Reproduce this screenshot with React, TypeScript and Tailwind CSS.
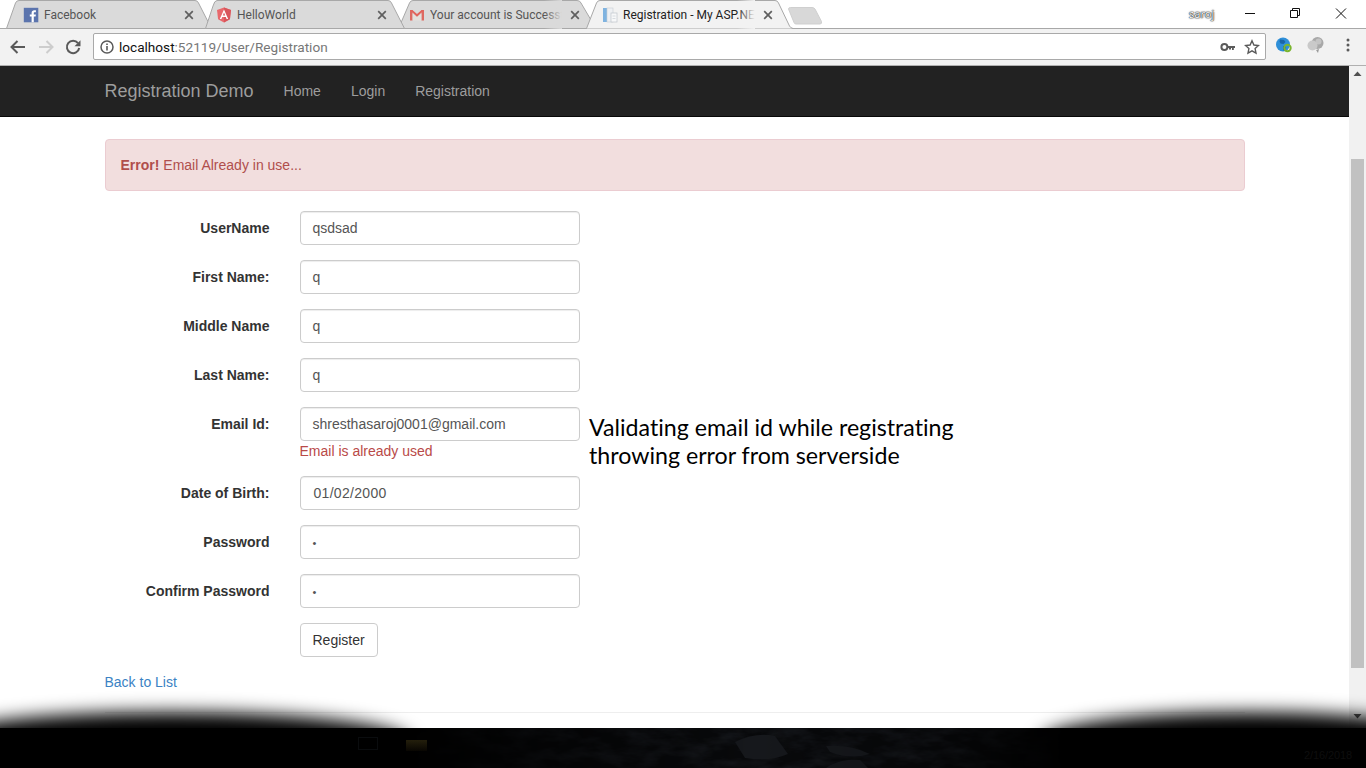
import React from "react";

const sans = "font-['Liberation_Sans',Arial,sans-serif]";

function TabShape({ d, fill, stroke }: { d: string; fill: string; stroke: string }) {
  return (
    <svg className="absolute left-0 top-0" width="1366" height="29" viewBox="0 0 1366 29">
      <path d={d} fill={fill} stroke={stroke} strokeWidth="1" />
    </svg>
  );
}

function Close() {
  return (
    <svg width="10" height="10" viewBox="0 0 10 10" className="shrink-0">
      <path d="M1.2 1.2L8.8 8.8M8.8 1.2L1.2 8.8" stroke="#5f5f5f" strokeWidth="1.7" />
    </svg>
  );
}

function Tab({
  left,
  width,
  icon,
  title,
  active,
  fade,
}: {
  left: number;
  width: number;
  icon: React.ReactNode;
  title: string;
  active?: boolean;
  fade?: boolean;
}) {
  return (
    <div className="absolute top-0 h-[29px] flex items-center" style={{ left, width }}>
      <div className="w-4 h-4 shrink-0">{icon}</div>
      <div
        className={`relative ml-[5px] flex-1 overflow-hidden whitespace-nowrap text-[12px] leading-[31px] h-[29px] font-['Roboto',sans-serif] ${
          active ? "text-[#222]" : "text-[#555]"
        }`}
      >
        {title}
        {fade && (
          <div
            className={`absolute right-0 top-0 h-full w-[18px] bg-gradient-to-r from-transparent ${
              active ? "to-[#f2f2f2]" : "to-[#dadada]"
            }`}
          />
        )}
      </div>
      <div className={fade ? "ml-[8px]" : "ml-[3px]"}>
        <Close />
      </div>
    </div>
  );
}

const FacebookIcon = (
  <svg viewBox="0 0 16 16" width="16" height="16">
    <rect x="0" y="0" width="14.5" height="14.5" fill="#5b74ad" transform="translate(.8 .8)" />
    <path d="M10.8 15.3V9.6h1.8l.3-2.1h-2.1V6.2c0-.6.2-1 1-1h1.1V3.3c-.2 0-.9-.1-1.6-.1-1.6 0-2.7 1-2.7 2.8v1.5H6.8v2.1h1.8v5.7z" fill="#fff" />
  </svg>
);
const AngularIcon = (
  <svg viewBox="0 0 16 16" width="16" height="16">
    <path d="M8 0.5L1 3l1.1 9.2L8 15.5l5.9-3.3L15 3z" fill="#e8686c" />
    <path d="M8 0.5L15 3l-1.1 9.2L8 15.5z" fill="#d9565b" />
    <path d="M8 2.6L3.8 12h1.6l.8-2.1h3.6l.8 2.1h1.6zM9.2 8.6H6.8L8 5.6z" fill="#fff" />
  </svg>
);
const GmailIcon = (
  <svg viewBox="0 0 16 16" width="16" height="16">
    <path d="M1 3h2.6v10.5H1zM12.4 3H15v10.5h-2.6z" fill="#de6a62" />
    <path d="M1 3h2.4L8 7l4.6-4H15L8 10z" fill="#e2645c" />
    <path d="M3.6 6.2L8 10l4.4-3.8v7.3H3.6z" fill="#e4e0dc" />
  </svg>
);
const DocIcon = (
  <svg viewBox="0 0 16 16" width="16" height="16">
    <rect x="1" y="1" width="5" height="14" fill="#7fb3e0" />
    <rect x="5" y="1" width="6" height="14" fill="#eef0f3" stroke="#c6ccd3" strokeWidth="0.6" />
    <rect x="9" y="6" width="6" height="9" fill="#f7f8f9" stroke="#bfc5cc" strokeWidth="0.7" />
    <path d="M10.5 9h3M10.5 11.5h3" stroke="#cfd4da" strokeWidth="0.8" />
  </svg>
);

function TabStrip() {
  return (
    <div className="relative h-[29px] shrink-0 bg-white overflow-hidden">
      <div className="absolute left-0 right-0 bottom-0 h-px bg-[#a9a9a9]" />
      <TabShape d="M6.5 28.5L15.5 3Q16.5 .5 19 .5H195Q197.5 .5 198.5 3L211.5 28.5Z" fill="#dadada" stroke="#a8a8a8" />
      <TabShape d="M398.5 28.5L409.5 3Q410.5 .5 413 .5H577Q580 .5 581 3L596 28.5Z" fill="#dadada" stroke="#a8a8a8" />
      <TabShape d="M205.5 28.5L213 6Q214.5 .5 217 .5H388Q390.5 .5 391.5 3L404.5 28.5Z" fill="#dadada" stroke="#a8a8a8" />
      <TabShape d="M585 28.5H586.5L596.5 3Q597.5 .5 600 .5H775Q777.5 .5 778.5 3L789.5 26Q790.5 28 793 28.5H1366" fill="#f2f2f2" stroke="#a8a8a8" />
      <TabShape d="M788.5 9Q788.5 7.5 790.5 7.5H812Q814 7.5 815 9L821.5 21.5Q822 24 820 24H796Q794.5 24 794 22.5Z" fill="#d8d8d8" stroke="#cfcfcf" />
      <Tab left={23} width={171} icon={FacebookIcon} title="Facebook" />
      <Tab left={216} width={171} icon={AngularIcon} title="HelloWorld" />
      <Tab left={409} width={171} icon={GmailIcon} title="Your account is Successful" fade />
      <Tab left={602} width={171} icon={DocIcon} title="Registration - My ASP.NET Application" active fade />
      <div className="absolute left-[1189px] top-[6px] text-[11px] leading-[16px] text-[#f4f4f4] font-['Noto_Sans',sans-serif] [text-shadow:0_0_1px_#222,0_0_1px_#222,0_0_2px_#444]">
        saroj
      </div>
      <svg className="absolute left-[1240px] top-[4px]" width="120" height="20" viewBox="0 0 120 20">
        <path d="M5 9.5H15" stroke="#111" strokeWidth="1" />
        <path d="M50.5 6.5h7v7h-7zM52.5 6.5v-2h7v7h-2" fill="none" stroke="#111" strokeWidth="1" />
        <path d="M96 4.5L106 14.5M106 4.5L96 14.5" stroke="#111" strokeWidth="1" />
      </svg>
    </div>
  );
}

function Toolbar() {
  return (
    <div className="h-[37px] shrink-0 bg-[#f2f2f2] flex items-center border-b border-[#b0b0b0] pb-px">
      <div className="w-[93px] flex items-center shrink-0">
        <svg width="93" height="20" viewBox="0 0 93 20">
          <path d="M24.5 10H11.5M17 4L11 10l6 6" fill="none" stroke="#5a5a5a" strokeWidth="2" transform="translate(0.5 0)" />
          <path d="M39 10H52M46.5 4l6 6-6 6" fill="none" stroke="#cdcdcd" strokeWidth="2" />
          <path d="M78 6.2A6.2 6.2 0 1 0 79.2 11" fill="none" stroke="#5a5a5a" strokeWidth="2" />
          <path d="M80.5 3.2v6h-6z" fill="#5a5a5a" />
        </svg>
      </div>
      <div className="w-[1173px] h-[27px] shrink-0 bg-white border border-[#a9a9a9] rounded-[2px] flex items-center pl-[5px] pr-[5px]">
        <svg width="16" height="16" viewBox="0 0 16 16" className="shrink-0">
          <circle cx="8" cy="8" r="6" fill="none" stroke="#5a5a5a" strokeWidth="1.5" />
          <path d="M8 7v4.4M8 4.6v1.4" stroke="#5a5a5a" strokeWidth="1.6" />
        </svg>
        <div className="ml-[4px] mt-[2px] text-[13.6px] font-['Roboto',sans-serif] text-[#777] whitespace-nowrap">
          <span className="text-[#111]">localhost</span>:52119/User/Registration
        </div>
        <div className="flex-1" />
        <svg width="16" height="16" viewBox="0 0 16 16" className="shrink-0 mr-[8px]">
          <circle cx="4.4" cy="8" r="3" fill="none" stroke="#5a5a5a" strokeWidth="2" />
          <path d="M7 7h8v2h-1.2v2h-1.8V9h-1v1.5H9V9H7z" fill="#5a5a5a" />
        </svg>
        <svg width="16" height="16" viewBox="0 0 16 16" className="shrink-0">
          <path d="M8 1.8l1.9 4.2 4.6.5-3.4 3.1.9 4.6L8 11.9l-4 2.3.9-4.6L1.5 6.5l4.6-.5z" fill="none" stroke="#5a5a5a" strokeWidth="1.4" />
        </svg>
      </div>
      <div className="flex-1 relative h-full">
        <svg className="absolute left-[9px] top-[7px]" width="18" height="18" viewBox="0 0 18 18">
          <circle cx="8" cy="8.5" r="7" fill="#2f8fd8" />
          <path d="M5 3.5l4 .5 1.5 2-2 2-3-.5-1-2zM8 10l3 .5-1 3.5-2 .5z" fill="#1a66a8" />
          <circle cx="12.5" cy="12" r="3.2" fill="none" stroke="#7ab52e" strokeWidth="2" />
        </svg>
        <svg className="absolute left-[41px] top-[7px]" width="18" height="18" viewBox="0 0 18 18">
          <circle cx="10.5" cy="7" r="6" fill="#a8a8a8" />
          <circle cx="11.5" cy="5.5" r="3" fill="#c4c4c4" />
          <circle cx="5.5" cy="9.5" r="5" fill="#c9c9c9" />
          <path d="M9 14l2 3 1-4z" fill="#9a9a9a" />
        </svg>
        <svg className="absolute left-[80px] top-[8px]" width="4" height="16" viewBox="0 0 4 16">
          <circle cx="2" cy="3" r="1.5" fill="#5a5a5a" />
          <circle cx="2" cy="8" r="1.5" fill="#5a5a5a" />
          <circle cx="2" cy="13" r="1.5" fill="#5a5a5a" />
        </svg>
      </div>
    </div>
  );
}

function Field({ label, children, error }: { label: string; children: React.ReactNode; error?: string }) {
  return (
    <div className="flex mb-[15px]">
      <label className="w-[165px] shrink-0 pt-[7px] text-right text-[14px] leading-[20px] font-bold text-[#333]">
        {label}
      </label>
      <div className="ml-[30px] w-[280px]">
        <div className="h-[34px] rounded border border-[#ccc] bg-white px-[12px] text-[14px] leading-[32px] text-[#555] shadow-[inset_0_1px_1px_rgba(0,0,0,0.075)]">
          {children}
        </div>
        {error && <div className="text-[14px] leading-[20px] text-[#b94a48]">{error}</div>}
      </div>
    </div>
  );
}

function Scrollbar() {
  return (
    <div className="w-[17px] shrink-0 bg-[#f1f1f1] flex flex-col items-center">
      <svg width="17" height="17" viewBox="0 0 17 17" className="shrink-0">
        <path d="M8.5 5.5L12.5 10H4.5z" fill="#505050" />
      </svg>
      <div className="h-[76px] shrink-0" />
      <div className="w-[13px] h-[509px] bg-[#c1c1c1] shrink-0" />
      <div className="flex-1" />
      <svg width="17" height="17" viewBox="0 0 17 17" className="shrink-0 mb-[4px]">
        <path d="M8.5 11.5L12.5 7H4.5z" fill="#505050" />
      </svg>
    </div>
  );
}

function Wallpaper() {
  return (
    <div className="relative h-[40px] shrink-0 bg-black overflow-hidden">
      <svg className="absolute left-0 top-0" width="1366" height="40" viewBox="0 0 1366 40">
        <defs>
          <linearGradient id="rockMask" x1="0" x2="1" y1="0" y2="0">
            <stop offset="0.3" stopColor="#000" />
            <stop offset="0.4" stopColor="#777" />
            <stop offset="0.55" stopColor="#fff" />
            <stop offset="0.68" stopColor="#ccc" />
            <stop offset="0.78" stopColor="#000" />
          </linearGradient>
          <mask id="rockFade">
            <rect width="1366" height="40" fill="url(#rockMask)" />
          </mask>
          <filter id="rockNoise" x="0" y="0" width="100%" height="100%" colorInterpolationFilters="sRGB">
            <feTurbulence type="fractalNoise" baseFrequency="0.035 0.09" numOctaves="4" seed="7" />
            <feColorMatrix
              type="matrix"
              values="0 0 0 0 0.1  0 0 0 0 0.11  0 0 0 0 0.13  1.6 0 0 0 -0.6"
            />
          </filter>
          <linearGradient id="gold" x1="0" x2="0" y1="0" y2="1">
            <stop offset="0" stopColor="#241f0c" />
            <stop offset="1" stopColor="#080602" />
          </linearGradient>
        </defs>
        <g mask="url(#rockFade)">
          <rect width="1366" height="40" fill="#08090b" />
          <rect width="1366" height="40" filter="url(#rockNoise)" />
          <g fill="#16181c">
            <path d="M735 14Q755 4 775 8L788 26Q770 34 745 30Z" />
            <path d="M826 18Q850 16 870 26Q850 32 830 24Z" />
            <path d="M826 40Q840 30 860 32L868 40Z" />
          </g>
        </g>
        <rect x="406" y="12" width="21" height="11" fill="url(#gold)" />
        <rect x="358.5" y="9.5" width="19" height="12" fill="none" stroke="#0a0c0e" />
      </svg>
      <div className="absolute left-[1304px] top-[20px] text-[11px] leading-[14px] tracking-[-0.1px] whitespace-nowrap text-[#0e0e0e]">2/16/2018</div>
    </div>
  );
}

export default function App() {
  return (
    <div className={`relative h-[768px] w-[1366px] overflow-hidden flex flex-col bg-white ${sans}`}>
      <TabStrip />
      <Toolbar />
      <div className="flex-1 flex min-h-0">
        <div className="relative flex-1 min-w-0 overflow-hidden">
          <nav className="h-[51px] bg-[#222] border-b border-[#080808]">
            <div className="w-[1170px] mx-auto px-[15px] flex items-center h-[50px]">
              <span className="text-[18px] text-[#9d9d9d] mr-[30px]">Registration Demo</span>
              <span className="text-[14px] text-[#9d9d9d] mr-[30px]">Home</span>
              <span className="text-[14px] text-[#9d9d9d] mr-[30px]">Login</span>
              <span className="text-[14px] text-[#9d9d9d]">Registration</span>
            </div>
          </nav>
          <div className="w-[1170px] mx-auto px-[15px] pt-[22px]">
            <div className="h-[52px] mb-[20px] rounded border border-[#ebccd1] bg-[#f2dede] px-[15px] text-[14px] leading-[50px] text-[#b04e4c]">
              <strong>Error!</strong> Email Already in use...
            </div>
            <Field label="UserName">qsdsad</Field>
            <Field label="First Name:">q</Field>
            <Field label="Middle Name">q</Field>
            <Field label="Last Name:">q</Field>
            <Field label="Email Id:" error="Email is already used">shresthasaroj0001@gmail.com</Field>
            <Field label="Date of Birth:">
              <span className="ml-[1px] tracking-[0.3px]">01/02/2000</span>
            </Field>
            <Field label="Password">
              <span className="text-[11px]">•</span>
            </Field>
            <Field label="Confirm Password">
              <span className="text-[11px]">•</span>
            </Field>
            <div className="ml-[195px] mb-[15px]">
              <div className="inline-block h-[34px] rounded border border-[#ccc] bg-white px-[12px] text-[14px] leading-[32px] text-[#333]">
                Register
              </div>
            </div>
            <div className="text-[14px] leading-[20px] text-[#3b82c4]">Back to List</div>
            <div className="mt-[20px] border-t border-[#eee]" />
          </div>
          <div className="absolute left-[589px] top-[347px] text-[23.2px] leading-[28px] text-black font-['Lato',sans-serif] [font-variant-ligatures:none] whitespace-nowrap">
            Validating email id while registrating
            <br />
            throwing error from serverside
          </div>
        </div>
        <Scrollbar />
      </div>
      <Wallpaper />
      <div className="absolute left-0 top-[668px] w-[1366px] h-[60px] overflow-hidden pointer-events-none">
        <div className="absolute left-[-70px] top-[44px] w-[480px] h-[60px] rounded-[50%] bg-black blur-[9px]" />
        <div className="absolute left-[1040px] top-[44px] w-[420px] h-[60px] rounded-[50%] bg-black blur-[9px]" />
      </div>
    </div>
  );
}
